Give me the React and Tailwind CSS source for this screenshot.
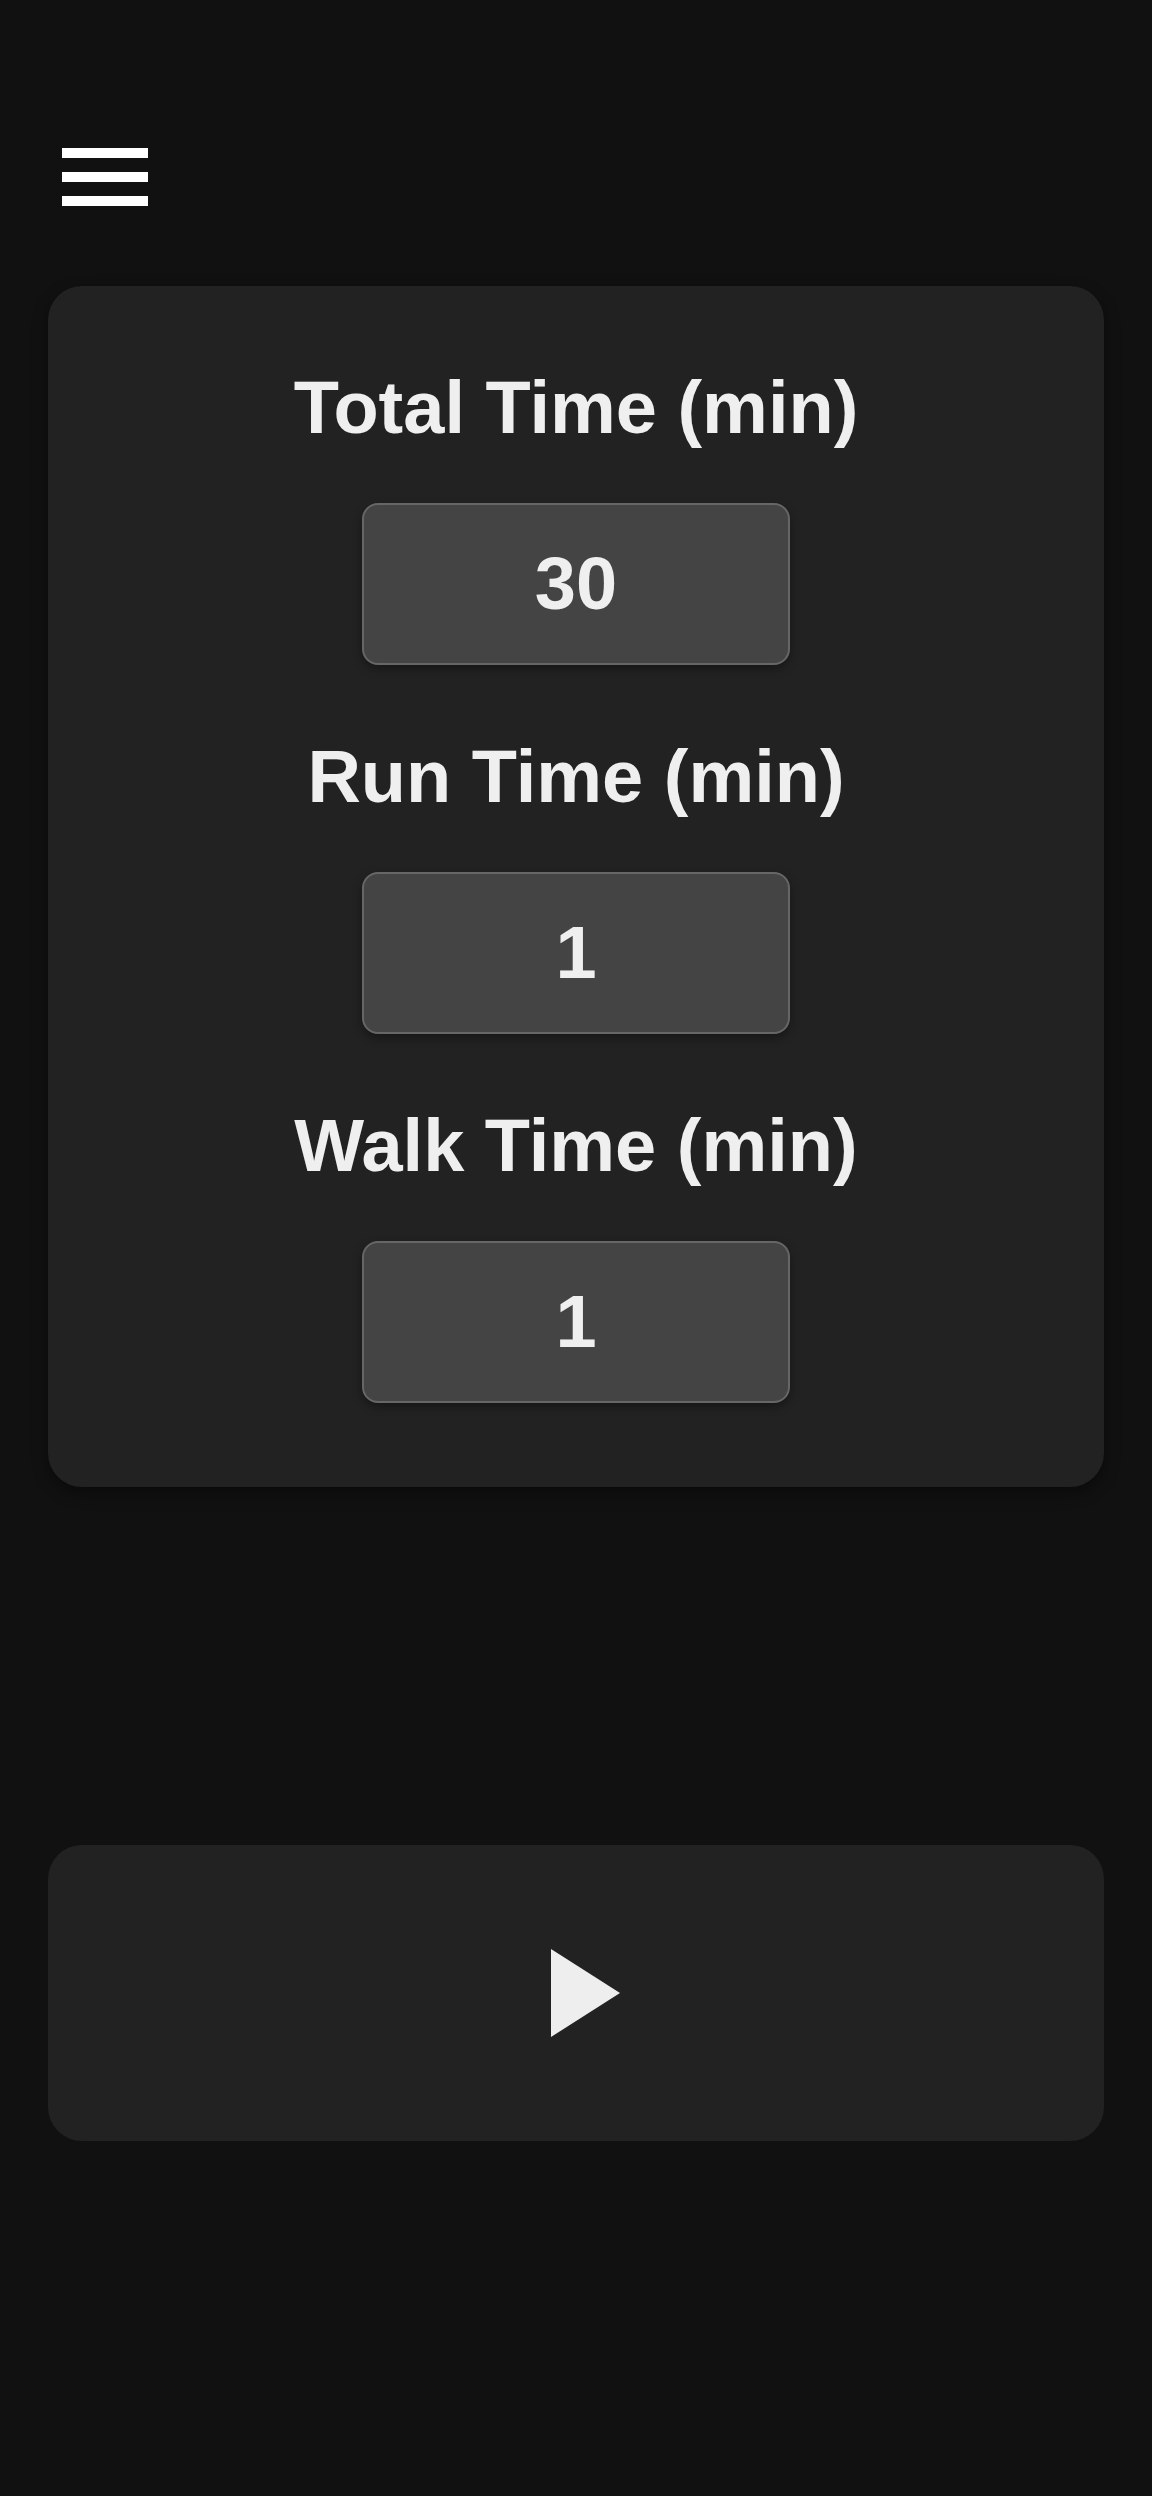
import React from "react";

function Field({ label, value }) {
  return (
    <div className="flex flex-col items-center">
      <div className="text-[74px] leading-[74px] font-bold text-[#efefef] whitespace-nowrap">{label}</div>
      <div className="mt-[58px] w-[428px] h-[162px] rounded-[16px] bg-[#444444] border-2 border-[#666666] shadow-[0_4px_10px_rgba(0,0,0,0.35)] flex items-center justify-center">
        <span className="text-[74px] leading-[74px] font-bold text-[#efefef]">{value}</span>
      </div>
    </div>
  );
}

export default function App() {
  return (
    <div
      className="min-h-screen bg-[#111111] px-[48px] pb-[10px]"
      style={{ fontFamily: '"Liberation Sans", Arial, sans-serif' }}
    >
      <div className="pt-[148px] pl-[14px]">
        <div className="flex flex-col gap-[14px] w-[86px]">
          <div className="h-[10px] bg-white"></div>
          <div className="h-[10px] bg-white"></div>
          <div className="h-[10px] bg-white"></div>
        </div>
      </div>
      <div className="mt-[80px] rounded-[34px] bg-[#222222] pt-[85px] pb-[84px] flex flex-col gap-[75px] shadow-[0_6px_16px_rgba(0,0,0,0.4)]">
        <Field label="Total Time (min)" value="30" />
        <Field label="Run Time (min)" value="1" />
        <Field label="Walk Time (min)" value="1" />
      </div>
      <div className="mt-[358px] h-[296px] rounded-[34px] bg-[#222222] flex items-center justify-center">
        <svg width="88" height="88" viewBox="0 0 88 88">
          <polygon points="19,0 88,44 19,88" fill="#eeeeee" />
        </svg>
      </div>
    </div>
  );
}
